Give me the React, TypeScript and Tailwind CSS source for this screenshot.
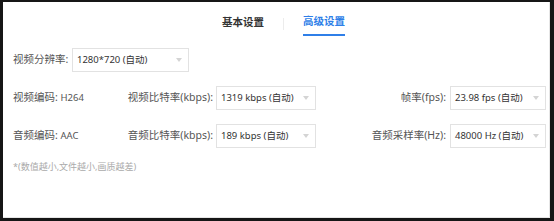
const font = { fontFamily: "'Noto Sans', 'Noto Sans CJK SC', sans-serif" };

function Select({ value, width }: { value: string; width: string }) {
  return (
    <div
      className={`flex h-[24px] ${width} items-center justify-between border border-[#e2e2e2] bg-white pl-[4px] pr-[6px] text-[9.5px] text-[#333]`}
    >
      <span>{value}</span>
      <span className="h-0 w-0 border-x-[3px] border-t-[4px] border-x-transparent border-t-[#d4d4d4]" />
    </div>
  );
}

export default function App() {
  return (
    <div className="h-[221px] w-[554px] bg-[#161616] pb-[3px] pl-[3px] pr-[4px] pt-[2px]" style={font}>
      <div className="flex h-full flex-col border-b border-r border-[#e6e6e6] bg-white">
        {/* tabs */}
        <div className="flex h-[34px] items-end pl-[219px]">
          <div className="pb-[5px] text-[10.5px] font-bold text-[#333]">基本设置</div>
          <div className="mx-[19px] mb-[6px] h-[12px] w-px bg-[#ececec]" />
          <div className="border-b-2 border-[#2f7fe8] pb-[4px] text-[10.5px] font-semibold text-[#2f7fe8]">
            高级设置
          </div>
        </div>

        <div className="flex flex-col gap-[14px] pl-[10px] pr-[3px] pt-[12px] text-[10.5px] text-[#555]">
          <div className="flex items-center">
            <span className="w-[59px]">视频分辨率:</span>
            <Select value="1280*720 (自动)" width="w-[117px]" />
          </div>

          <div className="flex items-center">
            <span className="w-[110px]">视频编码: <span className="text-[9.5px]">H264</span></span>
            <span className="w-[90px] text-right">视频比特率(kbps):</span>
            <div className="ml-[3px]">
              <Select value="1319 kbps (自动)" width="w-[100px]" />
            </div>
            <span className="flex-1 pr-[4px] text-right">帧率(fps):</span>
            <Select value="23.98 fps (自动)" width="w-[96px]" />
          </div>

          <div className="flex items-center">
            <span className="w-[110px]">音频编码: <span className="text-[9.5px]">AAC</span></span>
            <span className="w-[90px] text-right">音频比特率(kbps):</span>
            <div className="ml-[3px]">
              <Select value="189 kbps (自动)" width="w-[100px]" />
            </div>
            <span className="flex-1 pr-[4px] text-right">音频采样率(Hz):</span>
            <Select value="48000 Hz (自动)" width="w-[96px]" />
          </div>

          <div className="-mt-[2px] text-[9px] text-[#aaa]">*(数值越小,文件越小,画质越差)</div>
        </div>
      </div>
    </div>
  );
}
